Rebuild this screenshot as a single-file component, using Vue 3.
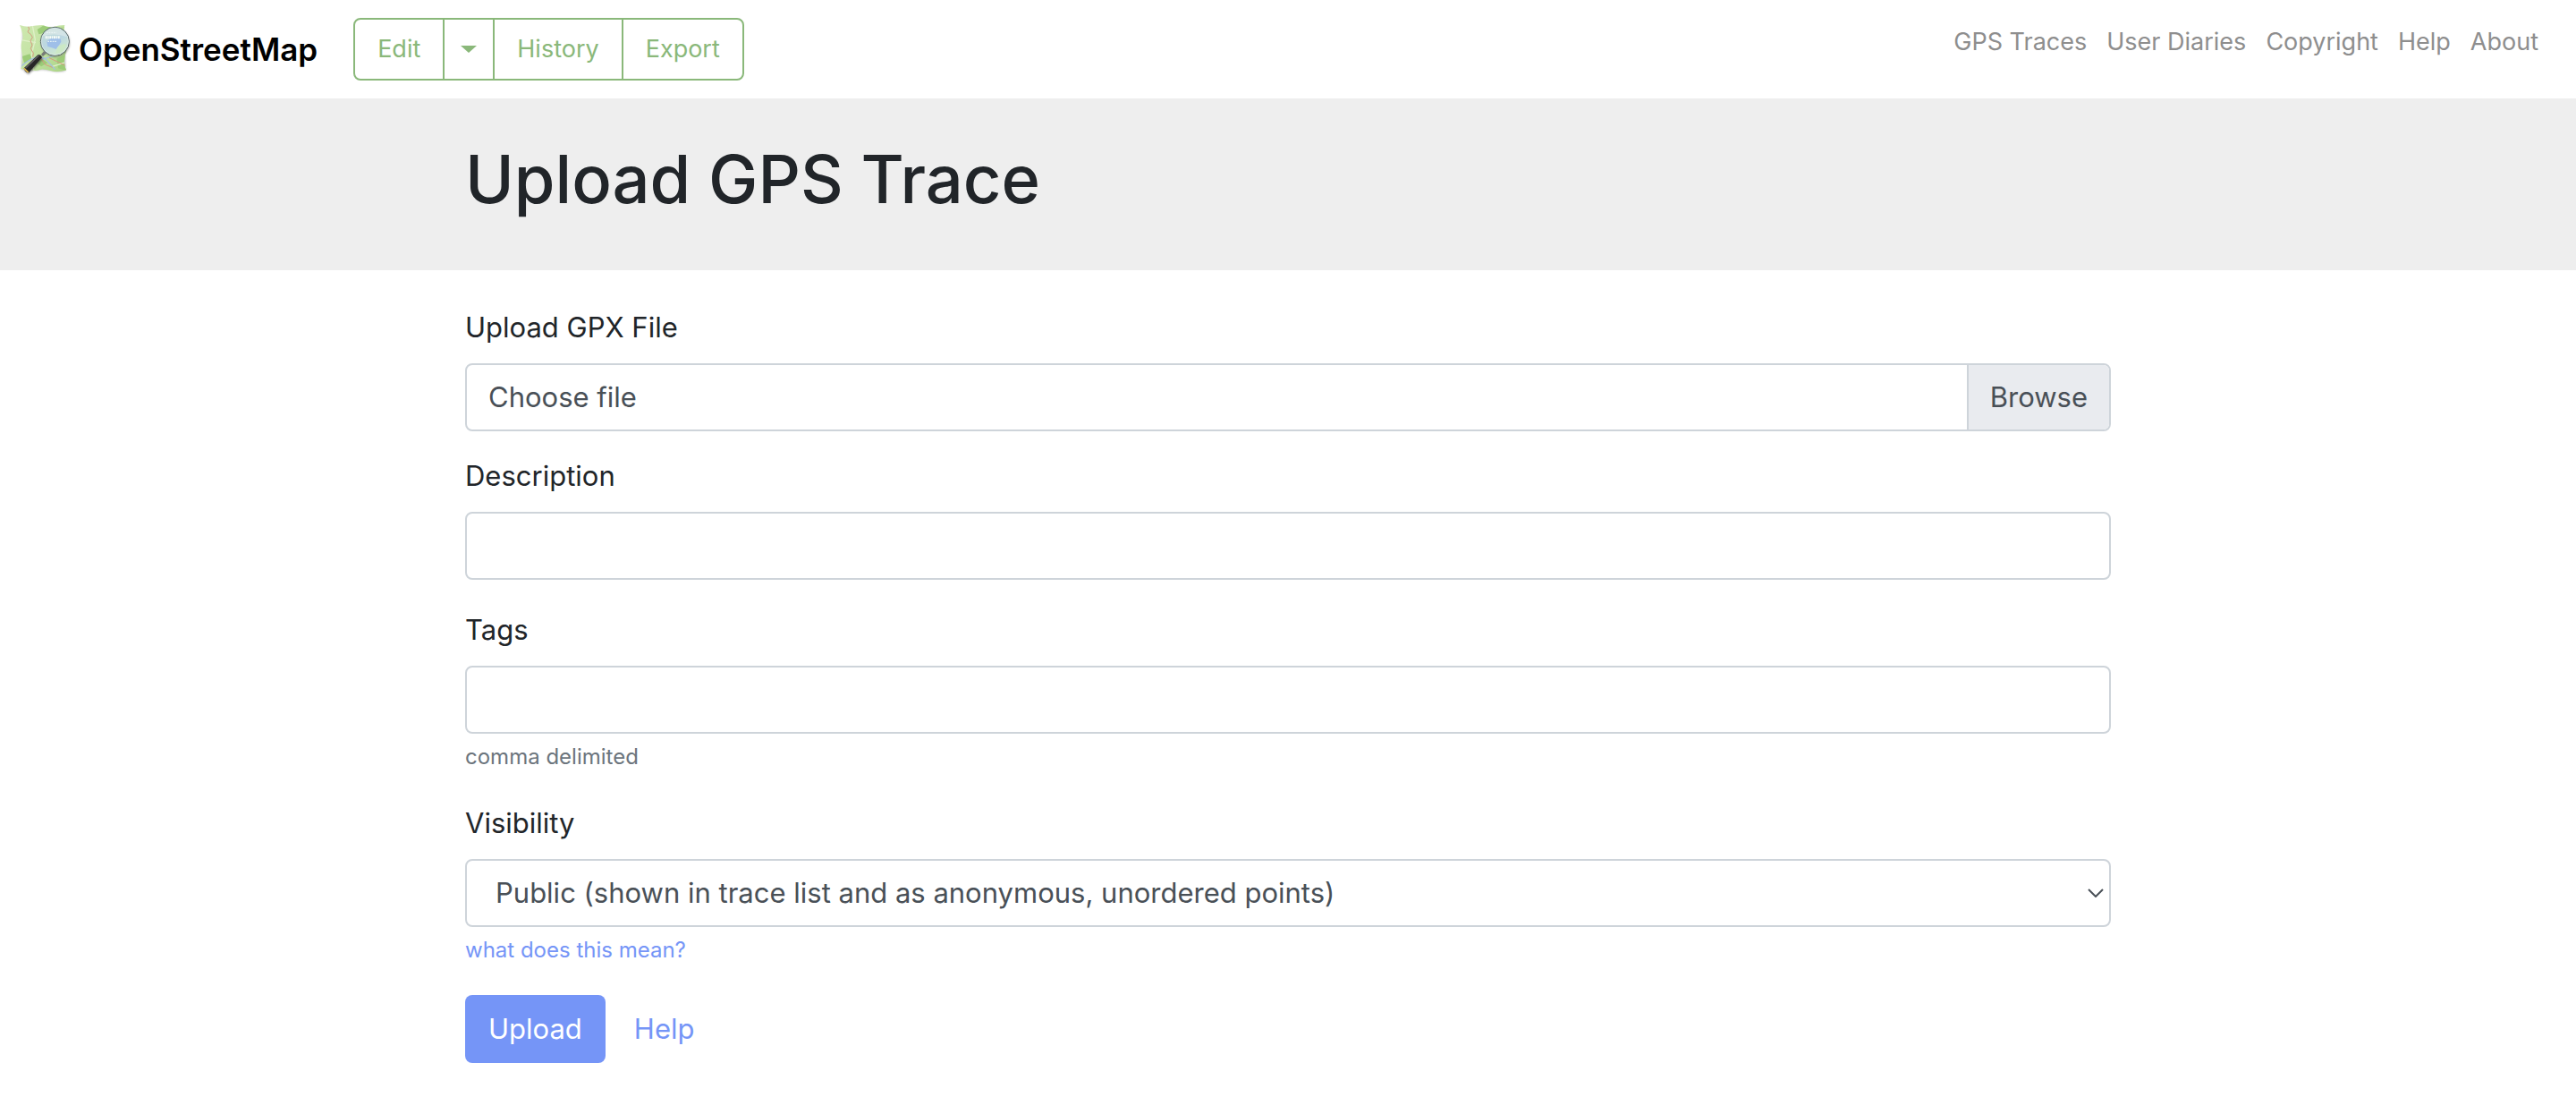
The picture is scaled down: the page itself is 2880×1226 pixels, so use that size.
<script setup>
import { ref } from 'vue'

const links = ['GPS Traces', 'User Diaries', 'Copyright', 'Help', 'About']
const fileName = ref('')
const description = ref('')
const tags = ref('')
const visibility = ref('identifiable')

const onFile = (event) => {
  const file = event.target.files[0]
  fileName.value = file ? file.name : ''
}
</script>

<template>
  <div class="page">
    <header class="header">
      <a class="brand" href="#">
        <svg class="logo" viewBox="30 42 180 180" aria-hidden="true">
          <defs>
            <linearGradient id="paper" x1="0" y1="0" x2="1" y2="1">
              <stop offset="0" stop-color="#cfe8b0" />
              <stop offset="0.5" stop-color="#c3e3a4" />
              <stop offset="1" stop-color="#a6d180" />
            </linearGradient>
            <linearGradient id="lens" x1="0.2" y1="0" x2="0.7" y2="1">
              <stop offset="0" stop-color="#c3dbd3" />
              <stop offset="0.5" stop-color="#bcd7e2" />
              <stop offset="1" stop-color="#d5efc9" />
            </linearGradient>
            <clipPath id="sheet">
              <path d="M36 51 Q58 58 74 55 T112 51 Q135 61 151 56 T187 51 Q180 78 186 96 T194 135 Q186 152 186 172 T192 202 Q170 210 150 206 T112 199 Q90 207 76 202 T40 199 Q49 168 43 142 T47 94 Q44 68 36 51Z" />
            </clipPath>
            <filter id="soft" x="-20%" y="-20%" width="140%" height="140%">
              <feGaussianBlur stdDeviation="3" />
            </filter>
          </defs>
          <path d="M46 66 H180 L188 140 L190 204 Q170 210 148 206 T110 201 Q78 208 42 200Z" fill="#555" opacity="0.4" filter="url(#soft)" />
          <g clip-path="url(#sheet)">
            <path d="M30 45 H200 V215 H30Z" fill="url(#paper)" />
            <path d="M95 66 L122 48 L145 60 L125 76 L100 82Z M160 164 L196 148 V205 L165 196Z M44 156 L70 148 L78 165 L52 180Z M92 178 L112 164 L130 178 L108 190Z" fill="#9ccc78" />
            <path d="M78 48 L88 100 L76 150 L84 210 M36 100 L90 110 M145 190 L190 176" fill="none" stroke="#e0f0c8" stroke-width="4" />
            <path d="M38 192 Q65 166 90 160 T130 172 L155 200 M110 165 Q145 160 190 135" fill="none" stroke="#a4bfe0" stroke-width="4" />
            <path d="M64 55 L68 64 L63 74 L73 82 L79 92 L72 104 L78 118 L73 130 L82 145 L80 158 M104 158 L122 184 L146 193 M135 161 L192 188" fill="none" stroke="#d59b80" stroke-width="3" />
            <path d="M176 56 H192 V100 L176 85Z" fill="#b5da90" />
          </g>
          <path d="M51 205 L104 152 L114 164 L66 216Z" fill="#333" opacity="0.6" filter="url(#soft)" />
          <circle cx="156" cy="110" r="48" fill="#555" opacity="0.5" filter="url(#soft)" />
          <path d="M108 149 L118 138 L125 146 L114 156Z" fill="#777a76" />
          <path d="M50 196 L97 151 Q107 148 111 160 L67 210 Q55 212 50 196Z" fill="#272727" />
          <path d="M56 195 L100 153" stroke="#636363" stroke-width="5" />
          <path d="M51 196 Q58 205 65 209" fill="none" stroke="#dfb84e" stroke-width="5" />
          <circle cx="154" cy="106" r="48" fill="url(#lens)" />
          <path d="M127 106 Q143 90 160 94 Q175 91 175 107 Q168 120 158 132 Q144 126 130 123Z" fill="#9fbfe8" />
          <path d="M162 126 Q180 112 192 116 Q184 143 157 148Z" fill="#cce9c5" />
          <path d="M113 88 Q125 60 161 64 Q186 69 194 91 Q158 75 113 88Z" fill="#e5eeed" opacity="0.55" />
          <path d="M122 92 H171" stroke="#f7fcf7" stroke-width="9" stroke-dasharray="6 2 4 2" />
          <path d="M126 76 H160 M130 106 H161" stroke="#e8f3f4" stroke-width="4" stroke-dasharray="5 3" />
          <circle cx="154" cy="106" r="48" fill="none" stroke="#566567" stroke-width="3" />
          <circle cx="154" cy="106" r="45" fill="none" stroke="#dce9e8" stroke-width="3" opacity="0.8" />
        </svg>
        <span>OpenStreetMap</span>
      </a>

      <nav class="tabs" aria-label="Map">
        <a class="tab" href="#">Edit</a>
        <button class="tab toggle" type="button" aria-label="Choose editor"><span class="caret"></span></button>
        <a class="tab" href="#">History</a>
        <a class="tab" href="#">Export</a>
      </nav>

      <nav class="links" aria-label="Site">
        <a v-for="link in links" :key="link" href="#">{{ link }}</a>
      </nav>
    </header>

    <div class="heading">
      <h1 class="container">Upload GPS Trace</h1>
    </div>

    <form class="container form" @submit.prevent>
      <div class="group file-group">
        <label for="gpx">Upload GPX File</label>
        <div class="file">
          <span class="file-name">{{ fileName || 'Choose file' }}</span>
          <span class="browse">Browse</span>
          <input id="gpx" class="file-input" type="file" @change="onFile" />
        </div>
      </div>

      <div class="group">
        <label for="description">Description</label>
        <input id="description" v-model="description" class="control" type="text" />
      </div>

      <div class="group">
        <label for="tags">Tags</label>
        <input id="tags" v-model="tags" class="control" type="text" />
        <small class="hint">comma delimited</small>
      </div>

      <div class="group">
        <label for="visibility">Visibility</label>
        <div class="select">
          <select id="visibility" v-model="visibility" class="control">
            <option value="identifiable">Public (shown in trace list and as anonymous, unordered points)</option>
          </select>
          <svg class="chevron" viewBox="0 0 18 10" aria-hidden="true">
            <path d="M1 1 L9 9 L17 1" fill="none" stroke="#495057" stroke-width="2" />
          </svg>
        </div>
        <small class="hint"><a href="#">what does this mean?</a></small>
      </div>

      <div class="actions">
        <button class="submit" type="submit">Upload</button>
        <a href="#">Help</a>
      </div>
    </form>
  </div>
</template>

<style>
body {
  margin: 0;
  background: #fff;
}
</style>

<style scoped>
.page {
  color: #212529;
  font-family: Inter, "Liberation Sans", sans-serif;
  font-size: 31px;
  line-height: 48px;
}

.page *,
.page *::before {
  box-sizing: border-box;
}

a {
  color: #7595f7;
  text-decoration: none;
}

.header {
  display: flex;
  align-items: center;
  height: 110px;
  padding: 0 42px 0 20px;
}

.brand {
  display: flex;
  align-items: center;
  gap: 8px;
  color: #000;
  font-size: 35px;
  font-weight: 600;
}

.logo {
  width: 60px;
  height: 60px;
}

.tabs {
  display: flex;
  margin-left: 40px;
  border: 2px solid #8ab87a;
  border-radius: 8px;
}

.tab {
  display: flex;
  align-items: center;
  height: 66px;
  padding: 0 25px;
  color: #8ab87a;
  font-size: 27px;
}

.tab + .tab {
  border: 0;
  border-left: 2px solid #8ab87a;
}

.toggle {
  padding: 0 18px;
  background: none;
}

.caret {
  border: 9px solid transparent;
  border-top: 8px solid #8ab87a;
  border-bottom: 0;
}

.links {
  display: flex;
  gap: 22px;
  margin: 0 0 16px auto;
  font-size: 27px;
}

.links a {
  color: #8e8e8e;
}

.container {
  width: calc(100% - 80px);
  max-width: 1840px;
  margin: 0 auto;
}

.heading {
  padding: 42px 0 54px;
  background: #eee;
}

h1 {
  font-size: 74px;
  font-weight: 500;
  line-height: 96px;
}

.form {
  padding: 40px 0;
}

.group {
  margin-bottom: 32px;
}

.file-group {
  margin-bottom: 26px;
}

label {
  display: block;
  margin-bottom: 16px;
}

.control,
.file {
  display: flex;
  width: 100%;
  height: 76px;
  border: 2px solid #ced4da;
  border-radius: 8px;
  background: #fff;
  color: #495057;
}

.control {
  padding: 0 32px;
  font: inherit;
  appearance: none;
}

.file,
.select {
  position: relative;
}

.file-name {
  flex: 1;
  padding: 12px 24px;
}

.browse {
  padding: 12px 24px;
  border-left: 2px solid #ced4da;
  border-radius: 0 6px 6px 0;
  background: #e9ebef;
}

.file-input {
  position: absolute;
  inset: 0;
  width: 100%;
  height: 100%;
  opacity: 0;
}

.chevron {
  position: absolute;
  top: 33px;
  right: 8px;
  width: 18px;
  height: 10px;
  pointer-events: none;
}

.hint {
  display: block;
  margin-top: 8px;
  color: #6c757d;
  font-size: 24px;
  line-height: 36px;
}

.actions {
  display: flex;
  align-items: center;
  gap: 32px;
}

.submit {
  height: 76px;
  padding: 0 26px;
  border: 0;
  border-radius: 8px;
  background: #7595f7;
  color: #fff;
  font: inherit;
}
</style>
